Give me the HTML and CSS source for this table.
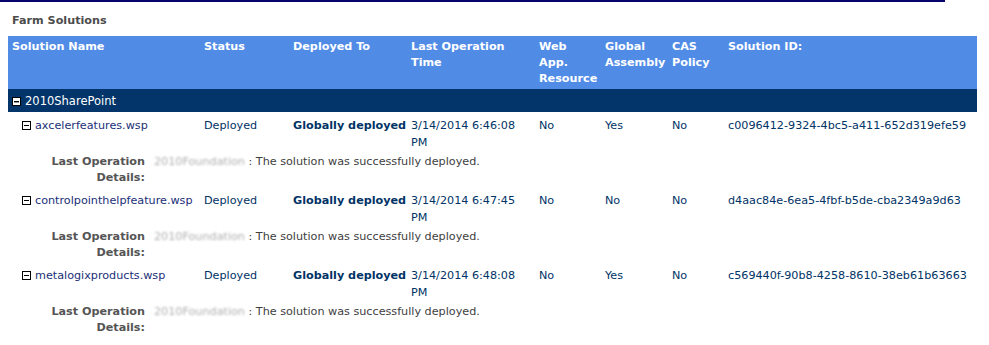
FILE: index.html
```html
<!DOCTYPE html>
<html>
<head>
<meta charset="utf-8">
<title>Farm Solutions</title>
<link rel="stylesheet" href="styles.css">
</head>
<body>
<div class="topline"></div>
<div class="title">Farm Solutions</div>
<table class="grid">
  <colgroup>
    <col class="c1"><col class="c2"><col class="c3"><col class="c4"><col class="c5"><col class="c6"><col class="c7"><col class="c8">
  </colgroup>
  <thead>
    <tr class="head">
      <th>Solution Name</th>
      <th>Status</th>
      <th>Deployed To</th>
      <th>Last Operation<br>Time</th>
      <th>Web<br>App.<br>Resource</th>
      <th>Global<br>Assembly</th>
      <th>CAS<br>Policy</th>
      <th>Solution ID:</th>
    </tr>
  </thead>
  <tbody>
    <tr class="group">
      <td colspan="8"><svg class="tog" width="9" height="9" viewBox="0 0 9 9"><rect x="0.5" y="0.5" width="8" height="8" fill="#fff" stroke="#000"/><rect x="2" y="4" width="5" height="1.4" fill="#000"/></svg>2010SharePoint</td>
    </tr>

    <tr class="data">
      <td class="name"><svg class="tog" width="9" height="9" viewBox="0 0 9 9"><rect x="0.5" y="0.5" width="8" height="8" fill="#fff" stroke="#000"/><rect x="2" y="4" width="5" height="1" fill="#000"/></svg>axcelerfeatures.wsp</td>
      <td>Deployed</td>
      <td class="strong">Globally deployed</td>
      <td>3/14/2014 6:46:08<br>PM</td>
      <td>No</td>
      <td>Yes</td>
      <td>No</td>
      <td>c0096412-9324-4bc5-a411-652d319efe59</td>
    </tr>
    <tr class="details">
      <td colspan="8"><div class="drow"><div class="dlabel">Last Operation<br>Details:</div><div class="dtext"><span class="blur">2010Foundation</span> : The solution was successfully deployed.</div></div></td>
    </tr>

    <tr class="data">
      <td class="name"><svg class="tog" width="9" height="9" viewBox="0 0 9 9"><rect x="0.5" y="0.5" width="8" height="8" fill="#fff" stroke="#000"/><rect x="2" y="4" width="5" height="1" fill="#000"/></svg>controlpointhelpfeature.wsp</td>
      <td>Deployed</td>
      <td class="strong">Globally deployed</td>
      <td>3/14/2014 6:47:45<br>PM</td>
      <td>No</td>
      <td>No</td>
      <td>No</td>
      <td>d4aac84e-6ea5-4fbf-b5de-cba2349a9d63</td>
    </tr>
    <tr class="details">
      <td colspan="8"><div class="drow"><div class="dlabel">Last Operation<br>Details:</div><div class="dtext"><span class="blur">2010Foundation</span> : The solution was successfully deployed.</div></div></td>
    </tr>

    <tr class="data">
      <td class="name"><svg class="tog" width="9" height="9" viewBox="0 0 9 9"><rect x="0.5" y="0.5" width="8" height="8" fill="#fff" stroke="#000"/><rect x="2" y="4" width="5" height="1" fill="#000"/></svg>metalogixproducts.wsp</td>
      <td>Deployed</td>
      <td class="strong">Globally deployed</td>
      <td>3/14/2014 6:48:08<br>PM</td>
      <td>No</td>
      <td>Yes</td>
      <td>No</td>
      <td>c569440f-90b8-4258-8610-38eb61b63663</td>
    </tr>
    <tr class="details">
      <td colspan="8"><div class="drow"><div class="dlabel">Last Operation<br>Details:</div><div class="dtext"><span class="blur">2010Foundation</span> : The solution was successfully deployed.</div></div></td>
    </tr>
  </tbody>
</table>
</body>
</html>
```
FILE: styles.css
```css
html, body {
  margin: 0;
  padding: 0;
  background: #fff;
}
body {
  font-family: "DejaVu Sans", Verdana, sans-serif;
  font-size: 11.2px;
  line-height: 16px;
  color: #003366;
}
.topline {
  width: 945px;
  height: 2px;
  background: #04046c;
}
.title {
  margin: 11px 0 7px 12px;
  font-weight: bold;
  color: #4c4c4c;
}
.grid {
  margin-left: 8px;
  width: 969px;
  table-layout: fixed;
  border-collapse: collapse;
  border-spacing: 0;
}
.c1 { width: 192px; }
.c2 { width: 89px; }
.c3 { width: 118px; }
.c4 { width: 128px; }
.c5 { width: 66px; }
.c6 { width: 67px; }
.c7 { width: 56px; }
.c8 { width: 253px; }
.head th {
  background: #508be6;
  color: #fff;
  font-weight: bold;
  text-align: left;
  vertical-align: top;
  white-space: nowrap;
  padding: 3px 0 2px 4px;
}
.group td {
  background: #03356a;
  color: #fff;
  padding: 4px 0 3px 4px;
  font-size: 11.5px;
}
.tog {
  display: inline-block;
  vertical-align: -1px;
  margin-right: 4px;
}
.data td {
  vertical-align: top;
  white-space: nowrap;
  line-height: 17px;
  padding: 5px 0 1px 4px;
  color: #003366;
}
.data td.name {
  padding-left: 14px;
  color: #1a2f78;
}
.data td.strong {
  font-weight: bold;
}
.details td {
  padding: 2px 0 1px 0;
}
.drow {
  display: flex;
  align-items: flex-start;
  gap: 9px;
}
.dlabel {
  width: 137px;
  text-align: right;
  font-weight: bold;
  color: #555;
}
.dtext {
  color: #404040;
  white-space: nowrap;
}
.blur {
  color: #b0b0b0;
  filter: blur(1px);
}
```
